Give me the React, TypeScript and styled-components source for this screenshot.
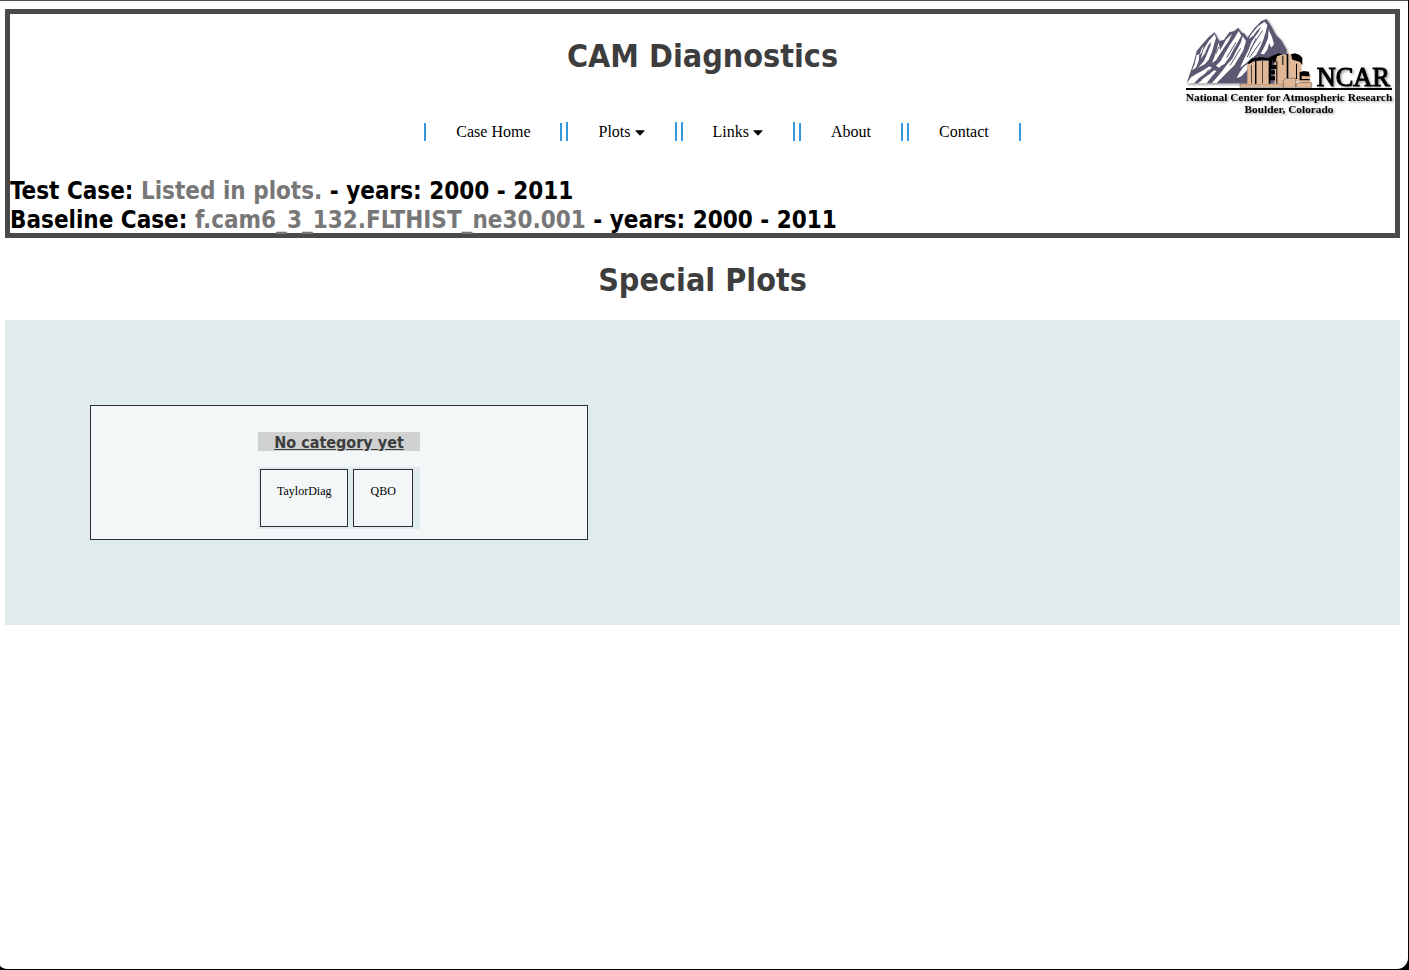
import React from "react";
import styled, { createGlobalStyle } from "styled-components";

const heading = `"DejaVu Sans Condensed", Tahoma, sans-serif`;
const serif = `"Liberation Serif", "Times New Roman", serif`;

const GlobalStyle = createGlobalStyle`
  *, *::before, *::after { box-sizing: border-box; }
  html { background: #000; }
  body { margin: 0; font-family: ${serif}; font-size: 16px; color: #000; }
  a { color: inherit; text-decoration: none; }
`;

const Window = styled.div`
  min-height: calc(100vh - 1px);
  margin-right: 1px;
  padding: 8px 8px 16px 5px;
  background: #fff;
  border-top: 1px solid #504d54;
  border-radius: 0 0 11px 8px / 0 0 11px 4px;
`;

const Header = styled.header`
  border: 5px solid #4a4a4a;
`;

const Banner = styled.div`
  display: grid;
  grid-template-columns: 210px 1fr 210px;
  height: 104px;
`;

const Title = styled.h1`
  margin: 0;
  color: #3d3d3d;
  font: bold 32px/39px ${heading};
  text-align: center;
`;

const BannerTitle = styled(Title)`
  grid-column: 2;
  padding-top: 23px;
`;

const SectionTitle = styled(Title)`
  padding: 23px 0 20px;
`;

const Logo = styled.svg`
  display: block;
  width: 210px;
  height: 104px;
`;

const Menu = styled.ul`
  display: flex;
  justify-content: center;
  align-items: flex-end;
  gap: 4px;
  margin: 0;
  padding: 4px 0 0 40px;
  list-style: none;
`;

const MenuItem = styled.li<{ $tall?: boolean }>`
  height: ${(p) => (p.$tall ? 19 : 18)}px;
  padding: 0 30px;
  border: solid #3498db;
  border-width: 0 2px;
  line-height: 18px;
  white-space: nowrap;
`;

const MenuButton = styled.button`
  display: flex;
  align-items: center;
  gap: 4px;
  padding: 0;
  border: 0;
  background: none;
  color: inherit;
  font: 16px/19px ${serif};
  cursor: pointer;
`;

const Caret = styled.svg`
  width: 10px;
  height: 6px;
  margin-top: 2px;
`;

const Cases = styled.h2`
  margin: 36px 0 0;
  font: bold 24px/29px ${heading};
  height: 56px;
`;

const CaseName = styled.span`
  color: #777;
`;

const Panel = styled.main`
  display: grid;
  grid-template-columns: minmax(0, 498px);
  padding: 85px;
  background: #e0ebed;
`;

const Card = styled.section`
  display: flex;
  flex-direction: column;
  align-items: center;
  padding: 26px 16px 10px;
  border: 1px solid #2b2f30;
  background: #f3f7f8;
`;

const Category = styled.div`
  width: 162px;
`;

const CategoryTitle = styled.h3`
  margin: 0 0 16px;
  padding-top: 2px;
  background: #d0d2d2;
  color: #3d3d3d;
  font: bold 16px/17px ${heading};
  text-align: center;
  text-decoration: underline;
`;

const PlotList = styled.div`
  display: flex;
  gap: 5px;
  padding: 2px;
  background: #e0ebed;
`;

const PlotLink = styled.a`
  padding: 14px 16px 28px;
  border: 1px solid #2b2f30;
  background: #f3f7f8;
  font-size: 12px;
  line-height: 14px;
`;

const menu = [
  { label: "Case Home" },
  { label: "Plots", drop: true },
  { label: "Links", drop: true },
  { label: "About" },
  { label: "Contact" },
];

function NcarLogo() {
  return (
    <Logo viewBox="15 12 630 312" role="img" aria-label="NCAR">
      <defs>
        <filter id="shade" x="-5%" y="-5%" width="115%" height="120%">
          <feDropShadow dx="4" dy="4" stdDeviation="3" floodColor="#000" floodOpacity="0.4" />
        </filter>
      </defs>
      <g filter="url(#shade)" transform="translate(12 15)">
        <path
          fill="#5d5872"
          d="M8 205 18 175 30 140 38 108 58 84 74 66 92 52 100 68 106 78 120 74 136 52 150 48 163 38 172 52 182 56 190 68 212 38 232 18 248 12 262 34 276 60 292 76 308 104 310 205Z"
        />
        <g fill="#fff">
          <path d="M88 62 74 78 58 104 50 132 62 116 72 92 82 78 72 108 60 138 42 158 62 148 74 134 84 110 92 82 96 70 92 58Z" />
          <path d="M104 82 98 104 92 124 84 144 96 136 106 120 120 98 134 78 144 56 126 74 116 92 108 106Z" />
          <path d="M164 48 152 68 136 92 122 116 110 138 96 152 104 158 122 146 138 124 148 104 160 84 172 62Z" />
          <path d="M176 64 170 84 158 106 146 130 130 148 116 166 98 188 84 204 98 204 112 190 130 172 150 152 164 130 178 106 186 78Z" />
          <path d="M8 205 22 186 38 176 58 166 76 154 84 158 66 174 46 188 30 205ZM42 205 56 192 76 178 90 166 98 168 84 184 68 205Z" />
          <path d="M38 120 32 148 24 166 36 158 44 138 46 118ZM54 100 46 120 52 114 60 92Z" />
          <path d="M242 20 222 34 202 58 194 72 208 62 218 48 232 34 224 50 204 78 192 108 180 132 168 158 184 146 200 132 216 120 228 98 238 74 246 48 250 30Z" />
          <path d="M254 44 252 70 242 94 230 116 240 118 250 104 256 84 262 98 270 88 264 66ZM178 156 166 174 158 190 172 184 190 164 192 146Z" />
        </g>
        <path
          fill="none"
          stroke="#5d5872"
          strokeWidth="3"
          d="M80 88 62 128M132 88 104 130M156 82 128 128M170 100 138 152M236 46 198 104M230 80 196 128M74 164 48 200M116 150 88 190M216 70 190 126M104 96 96 116"
        />
      </g>
      <g fill="#e0b898" stroke="#000" strokeWidth="1" transform="translate(165 15)">
        <path d="M15 207H145V217H15Z" />
        <path stroke="none" d="M37 146 50 142 62 138V207H37ZM64 138H103V207H64ZM118 136 127 122 148 118 158 122V207H118ZM160 118 176 116 200 140V200H160ZM196 178H226V207H196Z" />
        <g fill="#000" stroke="none">
          <path d="M37 146 48 132 62 128V134L44 146ZM54 134 74 126 104 130V136L82 134 62 138ZM60 138H64V207H60ZM49 150H51V205H49ZM82 138H84V205H82ZM103 126 116 122 112 138V150H124V162H108V166H120V178H108V184H120V196H106V206H101V138ZM112 122 132 115 142 118 126 124 122 140 114 144ZM142 122H145V150H142ZM155 118 160 116V194H155ZM168 118 180 115 194 120 202 128V150L194 140 172 134ZM183 146H186V192H183ZM194 172 206 168 222 170 224 184H214L200 182V192H224V196H194Z" />
          <path d="M124 138H127V206H124Z" />
        </g>
        <path d="M145 195 151 190H182V217H145ZM183 206 190 203H230V217H183Z" />
      </g>
      <path stroke="#000" strokeWidth="6" d="M18 237H636" />
      <g fill="#000" fontFamily={serif} fontWeight="bold" filter="url(#shade)">
        <text x="410" y="228" fontSize="79" fontWeight="normal" stroke="#000" strokeWidth="3">NCAR</text>
        <text x="327" y="272" fontSize="34" textAnchor="middle">National Center for Atmospheric Research</text>
        <text x="327" y="309" fontSize="34" textAnchor="middle">Boulder, Colorado</text>
      </g>
    </Logo>
  );
}

export default function App() {
  return (
    <>
      <GlobalStyle />
      <Window>
        <Header>
          <Banner>
            <BannerTitle>CAM Diagnostics</BannerTitle>
            <NcarLogo />
          </Banner>
          <nav>
            <Menu>
              {menu.map(({ label, drop }) => (
                <MenuItem key={label} $tall={drop}>
                  {drop ? (
                    <MenuButton type="button" aria-haspopup="menu">
                      {label}
                      <Caret viewBox="0 0 11 6" aria-hidden="true">
                        <path d="M1 0h9q1 0 .4.8L6 5.5q-.5.5-1 0L.6.8Q0 0 1 0Z" />
                      </Caret>
                    </MenuButton>
                  ) : (
                    <a href="#">{label}</a>
                  )}
                </MenuItem>
              ))}
            </Menu>
          </nav>
          <Cases>
            Test Case: <CaseName>Listed in plots.</CaseName> - years: 2000 - 2011
            <br />
            Baseline Case: <CaseName>f.cam6_3_132.FLTHIST_ne30.001</CaseName> - years: 2000 - 2011
          </Cases>
        </Header>
        <SectionTitle as="h1">Special Plots</SectionTitle>
        <Panel>
          <Card>
            <Category>
              <CategoryTitle>No category yet</CategoryTitle>
              <PlotList>
                <PlotLink href="#">TaylorDiag</PlotLink>
                <PlotLink href="#">QBO</PlotLink>
              </PlotList>
            </Category>
          </Card>
        </Panel>
      </Window>
    </>
  );
}
